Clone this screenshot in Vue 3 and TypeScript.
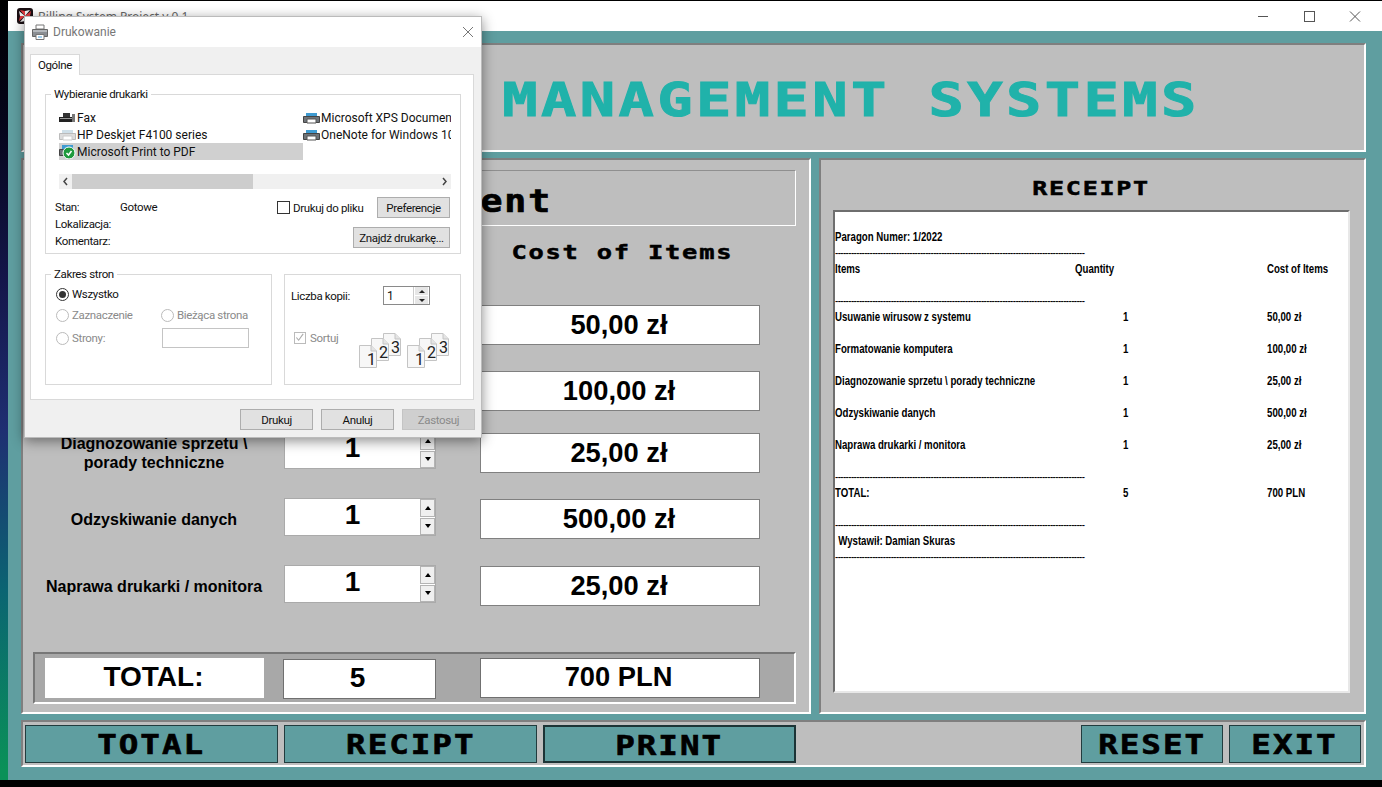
<script setup lang="ts">
interface Row { name: string; qty: number; cost: string; cls: string }
const rows: Row[] = [
  { name: 'Usuwanie wirusow z systemu', qty: 1, cost: '50,00 zł', cls: 'r1' },
  { name: 'Formatowanie komputera', qty: 1, cost: '100,00 zł', cls: 'r2' },
  { name: 'Diagnozowanie sprzetu \\ porady techniczne', qty: 1, cost: '25,00 zł', cls: 'r3' },
  { name: 'Odzyskiwanie danych', qty: 1, cost: '500,00 zł', cls: 'r4' },
  { name: 'Naprawa drukarki / monitora', qty: 1, cost: '25,00 zł', cls: 'r5' },
]
const dashes = '-'.repeat(94)
const pages = [
  { x: 24, y: 0, n: '3' },
  { x: 12, y: 5, n: '2' },
  { x: 0, y: 12, n: '1' },
]
</script>

<template>
  <div class="screen">
    <div class="strip"></div>
    <div class="win">
      <header class="titlebar">
        <svg class="appicon" width="16" height="16" viewBox="0 0 16 16">
          <rect width="16" height="16" rx="3" fill="#1b1014" />
          <path d="M8 8 L3 2 L8 3 Z M8 8 L14 3 L13 8 Z M8 8 L13 14 L8 13 Z M8 8 L2 13 L3 8 Z" fill="#e33a3f" />
          <path d="M8 8 L8 3 L13 2 Z M8 8 L13 8 L14 13 Z M8 8 L8 13 L3 14 Z M8 8 L3 8 L2 3 Z" fill="#f2f2f2" />
        </svg>
        <span class="apptitle">Billing System Project v 0.1</span>
        <div class="winbtns">
          <svg width="46" height="30" viewBox="0 0 46 30"><path d="M18 15.5H28" stroke="#555" /></svg>
          <svg width="46" height="30" viewBox="0 0 46 30"><rect x="18.5" y="10.5" width="10" height="10" fill="none" stroke="#555" /></svg>
          <svg width="46" height="30" viewBox="0 0 46 30"><path d="M18 10.5L28 20.5M28 10.5L18 20.5" stroke="#555" /></svg>
        </div>
      </header>

      <main class="content">
        <section class="hero ridge">
          <h1 class="pix hero-text">BILLING MANAGEMENT SYSTEMS</h1>
        </section>

        <div class="panels">
          <section class="left ridge">
            <div class="heading"><h2 class="pix heading-text">Item Payment</h2></div>
            <div class="grid colheads">
              <span class="pix colhead">Items</span>
              <span class="pix colhead">Quantity</span>
              <span class="pix colhead">Cost of Items</span>
            </div>
            <div v-for="r in rows" :key="r.cls" class="grid row" :class="r.cls">
              <div class="label">{{ r.name }}</div>
              <div class="spin">
                <span class="spin-val">{{ r.qty }}</span>
                <span class="spin-btns">
                  <i class="arrow up"></i>
                  <i class="arrow down"></i>
                </span>
              </div>
              <div class="cost">{{ r.cost }}</div>
            </div>
            <div class="totalbar">
              <div class="t-label">TOTAL:</div>
              <div class="t-qty">5</div>
              <div class="t-cost">700 PLN</div>
            </div>
          </section>

          <section class="right ridge">
            <h2 class="pix receipt-title">RECEIPT</h2>
            <div class="receipt">
              <div class="receipt-in">
                <div class="rl"></div>
                <div class="rl">Paragon Numer: 1/2022</div>
                <div class="rl dash">{{ dashes }}</div>
                <div class="rl head"><span>Items</span><span>Quantity</span><span>Cost of Items</span></div>
                <div class="rl"></div>
                <div class="rl dash">{{ dashes }}</div>
                <template v-for="r in rows" :key="r.cls">
                  <div class="rl cols"><span>{{ r.name }}</span><span>{{ r.qty }}</span><span>{{ r.cost }}</span></div>
                  <div class="rl"></div>
                </template>
                <div class="rl dash">{{ dashes }}</div>
                <div class="rl cols"><span>TOTAL:</span><span>5</span><span>700 PLN</span></div>
                <div class="rl"></div>
                <div class="rl dash">{{ dashes }}</div>
                <div class="rl sign">Wystawił: Damian Skuras</div>
                <div class="rl dash">{{ dashes }}</div>
              </div>
            </div>
          </section>
        </div>

        <nav class="actions ridge">
          <button class="act wide"><span class="pix act-t">TOTAL</span></button>
          <button class="act wide"><span class="pix act-t">RECIPT</span></button>
          <button class="act wide focus"><span class="pix act-t">PRINT</span></button>
          <button class="act reset"><span class="pix act-t">RESET</span></button>
          <button class="act exit"><span class="pix act-t">EXIT</span></button>
        </nav>
      </main>
    </div>

    <div class="dlg">
      <div class="dlg-title">
        <svg width="18" height="16" viewBox="0 0 18 16" class="dlg-ico">
          <path d="M5 1h8v4H5z" fill="#fff" stroke="#777" />
          <path d="M1.500 5.500h15v7h-15z" fill="#8b8f94" stroke="#666" />
          <path d="M2 6h14v2H2z" fill="#b5b9bd" />
          <path d="M5 10.500h8v5H5z" fill="#fff" stroke="#777" />
          <path d="M7 13h4" stroke="#4aa3df" />
        </svg>
        <span class="dlg-name">Drukowanie</span>
        <svg class="dlg-x" width="12" height="12" viewBox="0 0 12 12"><path d="M1 1L11 11M11 1L1 11" stroke="#777" fill="none" /></svg>
      </div>
      <div class="dlg-body">
        <div class="tab">Ogólne</div>
        <div class="pane">
          <div class="grp g-print">
            <span class="legend">Wybieranie drukarki</span>
            <div class="plist">
              <div class="pitem">
                <svg width="17" height="14" viewBox="0 0 17 14"><path d="M4 2h7v4H4z" fill="#333" /><path d="M0 6h14v5H0z" fill="#222" /><path d="M13 3h3v8h-3z" fill="#777" /><path d="M1 7h12v1H1z" fill="#999" /></svg>
                <span>Fax</span>
              </div>
              <div class="pitem">
                <svg width="17" height="14" viewBox="0 0 17 14"><path d="M3 2h11v3H3z" fill="#3f9bd1" /><path d="M0.500 5.500h16v6h-16z" fill="#6f7479" stroke="#444" /><path d="M4 8h9v4H4z" fill="#fff" stroke="#555" /></svg>
                <span>Microsoft XPS Document Writer</span>
              </div>
              <div class="pitem">
                <svg width="17" height="14" viewBox="0 0 17 14"><path d="M3 2h11v3H3z" fill="#cfdfe8" /><path d="M0.500 5.500h16v6h-16z" fill="#ddd" stroke="#bbb" /><path d="M4 8h9v4H4z" fill="#fff" stroke="#ccc" /></svg>
                <span>HP Deskjet F4100 series</span>
              </div>
              <div class="pitem">
                <svg width="17" height="14" viewBox="0 0 17 14"><path d="M3 2h11v3H3z" fill="#3f9bd1" /><path d="M0.500 5.500h16v6h-16z" fill="#6f7479" stroke="#444" /><path d="M4 8h9v4H4z" fill="#fff" stroke="#555" /></svg>
                <span>OneNote for Windows 10</span>
              </div>
              <div class="pitem sel">
                <svg width="17" height="15" viewBox="0 0 17 15"><path d="M3 1h11v4H3z" fill="#3f9bd1" /><path d="M0.500 5.500h8v6h-8z" fill="#6f7479" stroke="#444" /><circle cx="10" cy="9" r="6" fill="#1e9a3c" stroke="#fff" /><path d="M7.500 9l2 2 3-4" fill="none" stroke="#fff" stroke-width="1.500" /></svg>
                <span>Microsoft Print to PDF</span>
              </div>
            </div>
            <div class="hscroll">
              <svg width="13" height="15" viewBox="0 0 13 15"><path d="M8 4L5 7.500 8 11" fill="none" stroke="#444" stroke-width="1.500" /></svg>
              <div class="thumb"></div>
              <svg class="sc-r" width="13" height="15" viewBox="0 0 13 15"><path d="M5 4L8 7.500 5 11" fill="none" stroke="#444" stroke-width="1.500" /></svg>
            </div>
            <div class="status">
              <div class="info">
                <span>Stan:</span><span>Gotowe</span>
                <span>Lokalizacja:</span><span></span>
                <span>Komentarz:</span><span></span>
              </div>
              <div class="status-r">
                <div class="status-top">
                  <i class="check"></i><span class="tofile">Drukuj do pliku</span>
                  <button class="wbtn pref">Preferencje</button>
                </div>
                <button class="wbtn find">Znajdź drukarkę...</button>
              </div>
            </div>
          </div>

          <div class="lower">
            <div class="grp g-range">
              <span class="legend">Zakres stron</span>
              <div class="radios">
                <label class="radio full"><i class="rd on"></i>Wszystko</label>
                <label class="radio dim"><i class="rd"></i>Zaznaczenie</label>
                <label class="radio dim"><i class="rd"></i>Bieżąca strona</label>
                <label class="radio dim strony"><i class="rd"></i>Strony:</label>
                <div class="pages-in"></div>
              </div>
            </div>
            <div class="grp g-copies">
              <div class="copies-top">
                <span>Liczba kopii:</span>
                <div class="cspin">
                  <span class="cspin-v">1</span>
                  <span class="cspin-b"><i class="mini up"></i><i class="mini down"></i></span>
                </div>
              </div>
              <div class="copies-bot">
                <div class="sortuj">
                  <i class="check dimc">
                    <svg width="11" height="11" viewBox="0 0 11 11"><path d="M1.500 5.500l2.500 3 5-7" fill="none" stroke="#aaa" stroke-width="1.200" /></svg>
                  </i>
                  <span>Sortuj</span>
                </div>
                <svg class="collate" width="90" height="35" viewBox="0 0 90 35">
                  <g v-for="off in [0, 48]" :key="off" :transform="`translate(${off} 0)`">
                    <g v-for="p in pages" :key="p.n" :transform="`translate(${p.x} ${p.y})`">
                      <path d="M.5 .5H12L17.500 6V22.500H.5Z" fill="#f7f7f7" stroke="#c4c4c4" />
                      <path d="M12 .5V6H17.500" fill="#e4e4e4" stroke="#c4c4c4" />
                      <text x="8" y="20" font-size="16" fill="#222" class="numtxt">{{ p.n }}</text>
                    </g>
                  </g>
                </svg>
              </div>
            </div>
          </div>
        </div>
        <div class="dlg-foot">
          <button class="wbtn foot">Drukuj</button>
          <button class="wbtn foot">Anuluj</button>
          <button class="wbtn foot off">Zastosuj</button>
        </div>
      </div>
    </div>
  </div>
</template>

<style>
html, body { margin: 0; background: #000; overflow: hidden; }
</style>

<style scoped>
* { box-sizing: border-box; }
.screen {
  position: relative;
  width: 1382px;
  height: 787px;
  display: flex;
  overflow: hidden;
  background: #000;
  font-family: "Liberation Sans", Arial, sans-serif;
}
.strip {
  width: 8px;
  flex: none;
  height: 780px;
  background: linear-gradient(180deg, #000 0, #05051a 120px, #14164a 280px, #1f2f72 430px, #0b6472 590px, #0a9158 770px);
}
.win { flex: 1; min-width: 0; display: flex; flex-direction: column; margin-top: 1px; height: 779px; }
.titlebar {
  height: 30px;
  flex: none;
  background: #fff;
  display: flex;
  align-items: center;
  padding-left: 9px;
  padding-right: 4px;
}
.appicon { flex: none; margin-right: 5px; margin-top: -1px; }
.apptitle { font: 12px "Noto Sans", sans-serif; color: #666; }
.winbtns { margin-left: auto; display: flex; }
.content {
  flex: 1;
  background: #5f9ea0;
  padding: 12px 16px 0 13px;
  display: flex;
  flex-direction: column;
  gap: 6px;
}
.ridge {
  border: 2px solid;
  border-color: #7f7f7f #fff #fff #7f7f7f;
  background: #bebebe;
}
.pix {
  font-family: "DejaVu Sans Mono", monospace;
  font-weight: 700;
  margin: 0;
  white-space: pre;
  display: inline-block;
  color: #000;
}
.hero {
  height: 109px;
  display: flex;
  align-items: center;
  justify-content: center;
}
.hero-text {
  font-size: 47px;
  letter-spacing: 2.700px;
  color: #20b2aa;
  -webkit-text-stroke: 1px #20b2aa;
  transform: scaleX(1.25);
  margin: 3px 0 0 5px;
}
.panels { display: flex; gap: 8px; height: 556px; }
.left { width: 790px; padding: 10px 13px 8px 10px; display: flex; flex-direction: column; }
.right { width: 547px; padding: 0 14px 19px 12px; display: flex; flex-direction: column; align-items: stretch; }
.heading {
  height: 56px;
  border: 1px solid;
  border-color: #8f8f8f #fff #fff #8f8f8f;
  display: flex;
  align-items: center;
  justify-content: center;
}
.heading-text {
  font-size: 32px;
  letter-spacing: 1.6px;
  transform: scaleX(1.14);
  -webkit-text-stroke: .7px #000;
  margin: 5px 0 0 -10px;
}
.grid { display: grid; grid-template-columns: 251px 196px 280px; align-items: start; }
.colheads { height: 79px; padding-top: 14px; justify-items: center; }
.colhead { font-size: 20px; letter-spacing: 1.4px; transform: scaleX(1.27); -webkit-text-stroke: .5px #000; margin-left: 4px; }
.colheads .colhead:nth-child(1) { margin: 0 9px 0 0; }
.colheads .colhead:nth-child(2) { margin: 0 44px 0 0; }
.row { height: 40px; }
.r2 { margin-top: 26px; }
.r3 { margin-top: 22px; }
.r4 { margin-top: 26px; }
.r5 { margin-top: 27px; }
.label {
  width: 242px;
  min-height: 40px;
  display: flex;
  align-items: center;
  justify-content: center;
  text-align: center;
  font-weight: 700;
  font-size: 16px;
  line-height: 19px;
  color: #000;
}
.spin {
  width: 152px;
  height: 38px;
  background: #fff;
  border: 1px solid #aaa;
  display: flex;
  align-items: center;
  margin-top: -1px;
}
.r3 .spin { margin-top: -2px; }
.spin-val {
  flex: 1;
  text-align: center;
  font-weight: 700;
  font-size: 28px;
  color: #000;
  padding-bottom: 4px;
}
.spin-btns { display: flex; flex-direction: column; gap: 1px; width: 15px; height: 36px; flex: none; }
.arrow {
  flex: 1;
  background: #f0f0f0;
  border: 1px solid #b4b4b4;
  display: flex;
  align-items: center;
  justify-content: center;
}
.arrow::after { content: ""; border-left: 3.500px solid transparent; border-right: 3.500px solid transparent; }
.arrow.up::after { border-bottom: 4px solid #000; }
.arrow.down::after { border-top: 4px solid #000; }
.cost {
  width: 280px;
  height: 40px;
  background: #fff;
  border: 1px solid #808080;
  text-align: center;
  font-weight: 700;
  font-size: 27.300px;
  line-height: 37px;
  padding-right: 2px;
  color: #000;
}
.totalbar {
  margin-top: auto;
  height: 52px;
  background: #a8a8a8;
  border: 2px solid;
  border-color: #777 #fff #fff #777;
  display: grid;
  grid-template-columns: 238px 197px 280px;
  padding: 4px 0 0 10px;
  align-items: start;
}
.t-label {
  width: 219px;
  height: 40px;
  background: #fff;
  text-align: center;
  font-weight: 700;
  font-size: 28px;
  line-height: 38px;
  padding-right: 2px;
  color: #000;
}
.t-qty {
  width: 153px;
  height: 40px;
  margin-top: 1px;
  background: #fff;
  border: 1px solid #707070;
  text-align: center;
  font-weight: 700;
  font-size: 28px;
  line-height: 36px;
  padding-right: 4px;
  color: #000;
}
.t-cost {
  width: 280px;
  height: 40px;
  background: #fff;
  border: 1px solid #707070;
  text-align: center;
  font-weight: 700;
  font-size: 27.300px;
  line-height: 36px;
  padding-right: 3px;
  color: #000;
}
.receipt-title {
  font-size: 20px;
  letter-spacing: 1.4px;
  transform: scaleX(1.25);
  -webkit-text-stroke: .5px #000;
  align-self: center;
  height: 50px;
  line-height: 56px;
}
.receipt {
  flex: 1;
  background: #fff;
  border: 2px solid;
  border-color: #6e6e6e #e8e8e8 #e8e8e8 #6e6e6e;
  padding-top: 1px;
  font-family: "Liberation Sans", sans-serif;
  font-weight: 700;
  font-size: 12px;
  color: #000;
  overflow: hidden;
}
.receipt-in { transform: scaleX(.805); transform-origin: left top; width: 640px; }
.rl { height: 16px; line-height: 16px; white-space: pre; overflow: hidden; }
.head { display: grid; grid-template-columns: 298.100px 238.500px auto; }
.cols { display: grid; grid-template-columns: 357.800px 178.900px auto; }
.dash { width: 313px; letter-spacing: -0.7px; font-weight: 400; }
.sign { padding-left: 4px; }
.actions {
  height: 47px;
  display: flex;
  gap: 6px;
  padding: 3px 3px 0 2px;
  align-items: flex-start;
}
.act {
  height: 38px;
  background: #5f9ea0;
  border: 1px solid #223c3e;
  padding: 2px 0 0;
  text-align: center;
  overflow: hidden;
}
.act-t {
  font-size: 26px;
  line-height: 34px;
  letter-spacing: 1.6px;
  transform: scaleX(1.25);
  -webkit-text-stroke: .6px #000;
}
.act.wide { width: 253px; }
.act.focus { border: 2px solid #1c3436; }
.act.reset { width: 142px; margin-left: auto; }
.act.exit { width: 132px; }

.dlg {
  position: absolute;
  left: 24px;
  top: 16px;
  width: 458px;
  height: 422px;
  background: #f0f0f0;
  border: 1px solid #bbb;
  box-shadow: 0 3px 12px rgba(0, 0, 0, .45);
  display: flex;
  flex-direction: column;
  font-family: Roboto, sans-serif;
  font-size: 11.500px;
  letter-spacing: -.35px;
  color: #111;
}
.dlg-title { height: 30px; flex: none; background: #fff; display: flex; align-items: center; padding: 0 7px 0 6px; }
.dlg-ico { flex: none; margin-right: 4px; }
.dlg-name { color: #777; font-size: 12px; letter-spacing: 0; }
.dlg-x { margin-left: auto; }
.dlg-body { flex: 1; min-height: 0; padding: 7px 7px 7px 5px; display: flex; flex-direction: column; }
.tab {
  width: 50px;
  height: 21px;
  background: #fff;
  border: 1px solid #d9d9d9;
  border-bottom: 0;
  text-align: center;
  line-height: 20px;
  position: relative;
  z-index: 1;
  margin-bottom: -1px;
}
.pane {
  height: 326px;
  width: 444px;
  background: #fff;
  border: 1px solid #d9d9d9;
  padding: 19px 12px 0 14px;
}
.grp { position: relative; border: 1px solid #d9d9d9; }
.legend {
  position: absolute;
  left: 5px;
  top: -8px;
  background: #fff;
  padding: 0 3px;
  line-height: 15px;
  white-space: nowrap;
}
.g-print { height: 160px; padding: 14px 9px 0 13px; }
.plist { display: grid; grid-template-columns: 244px 148px; grid-auto-rows: 17px; overflow: hidden; }
.pitem { display: flex; align-items: center; gap: 1px; white-space: nowrap; overflow: hidden; font-size: 12px; letter-spacing: 0; }
.pitem svg { flex: none; }
.pitem.sel { background: #d0d0d0; }
.hscroll { margin-top: 14px; height: 15px; background: #f0f0f0; display: flex; }
.thumb { width: 181px; background: #cdcdcd; }
.sc-r { margin-left: auto; }
.status { margin: 8px 0 0 -4px; display: flex; justify-content: space-between; padding-right: 1px; }
.info {
  display: grid;
  grid-template-columns: 65px 100px;
  grid-auto-rows: 17px;
  align-items: center;
  padding-top: 1px;
}
.status-r { display: flex; flex-direction: column; align-items: flex-end; gap: 9px; }
.status-top { display: flex; align-items: center; }
.check {
  width: 13px;
  height: 13px;
  background: #fff;
  border: 1px solid #333;
  display: inline-flex;
  flex: none;
}
.tofile { width: 84px; margin-left: 3px; white-space: nowrap; }
.wbtn {
  height: 21px;
  background: #e1e1e1;
  border: 1px solid #adadad;
  font: inherit;
  letter-spacing: inherit;
  color: #111;
  padding: 0;
  white-space: nowrap;
}
.pref { width: 73px; }
.find { width: 97px; }
.lower { display: flex; gap: 12px; margin-top: 20px; }
.g-range { width: 227px; height: 111px; padding: 9px 10px; }
.radios { display: grid; grid-template-columns: 105px auto; grid-auto-rows: 20px; row-gap: 1px; }
.radio { display: flex; align-items: center; gap: 3px; white-space: nowrap; }
.radio.full { grid-column: 1 / 3; }
.radio.dim { color: #8a8a8a; }
.radio.strony { margin-top: 4px; }
.rd {
  width: 13px;
  height: 13px;
  border-radius: 50%;
  border: 1px solid #bbb;
  background: #fff;
  flex: none;
  display: flex;
  align-items: center;
  justify-content: center;
}
.rd.on { border-color: #333; }
.rd.on::after { content: ""; width: 7px; height: 7px; border-radius: 50%; background: #333; }
.pages-in { width: 87px; height: 20px; border: 1px solid #c4c4c4; background: #fff; margin: 2px 0 0 1px; }
.g-copies { width: 177px; height: 111px; padding: 11px 11px 0 6px; }
.copies-top { display: flex; align-items: center; justify-content: space-between; padding-right: 19px; height: 19px; }
.cspin { width: 47px; height: 19px; border: 1px solid #8a8a8a; display: flex; align-items: center; }
.cspin-v { flex: 1; padding-left: 3px; font-size: 12px; }
.cspin-b { width: 16px; height: 17px; display: flex; flex-direction: column; gap: 1px; padding: 0 1px; border-left: 1px solid #ccc; }
.mini { flex: 1; background: #e6e6e6; display: flex; align-items: center; justify-content: center; }
.mini::after { content: ""; border-left: 3px solid transparent; border-right: 3px solid transparent; }
.mini.up::after { border-bottom: 3px solid #222; }
.mini.down::after { border-top: 3px solid #222; }
.copies-bot { display: flex; justify-content: space-between; align-items: flex-start; margin-top: 28px; padding-left: 3px; }
.sortuj { display: flex; align-items: center; gap: 4px; color: #8a8a8a; height: 13px; margin-top: -2px; }
.check.dimc { width: 12px; height: 12px; border-color: #bbb; align-items: center; justify-content: center; }
.collate { flex: none; display: block; }
.numtxt { font-family: Roboto, sans-serif; }
.dlg-foot { display: flex; justify-content: flex-end; gap: 8px; margin-top: 9px; margin-right: -1px; }
.foot { width: 73px; }
.foot.off { background: #cfcfcf; border-color: #c4c4c4; color: #8a8a8a; }
</style>
